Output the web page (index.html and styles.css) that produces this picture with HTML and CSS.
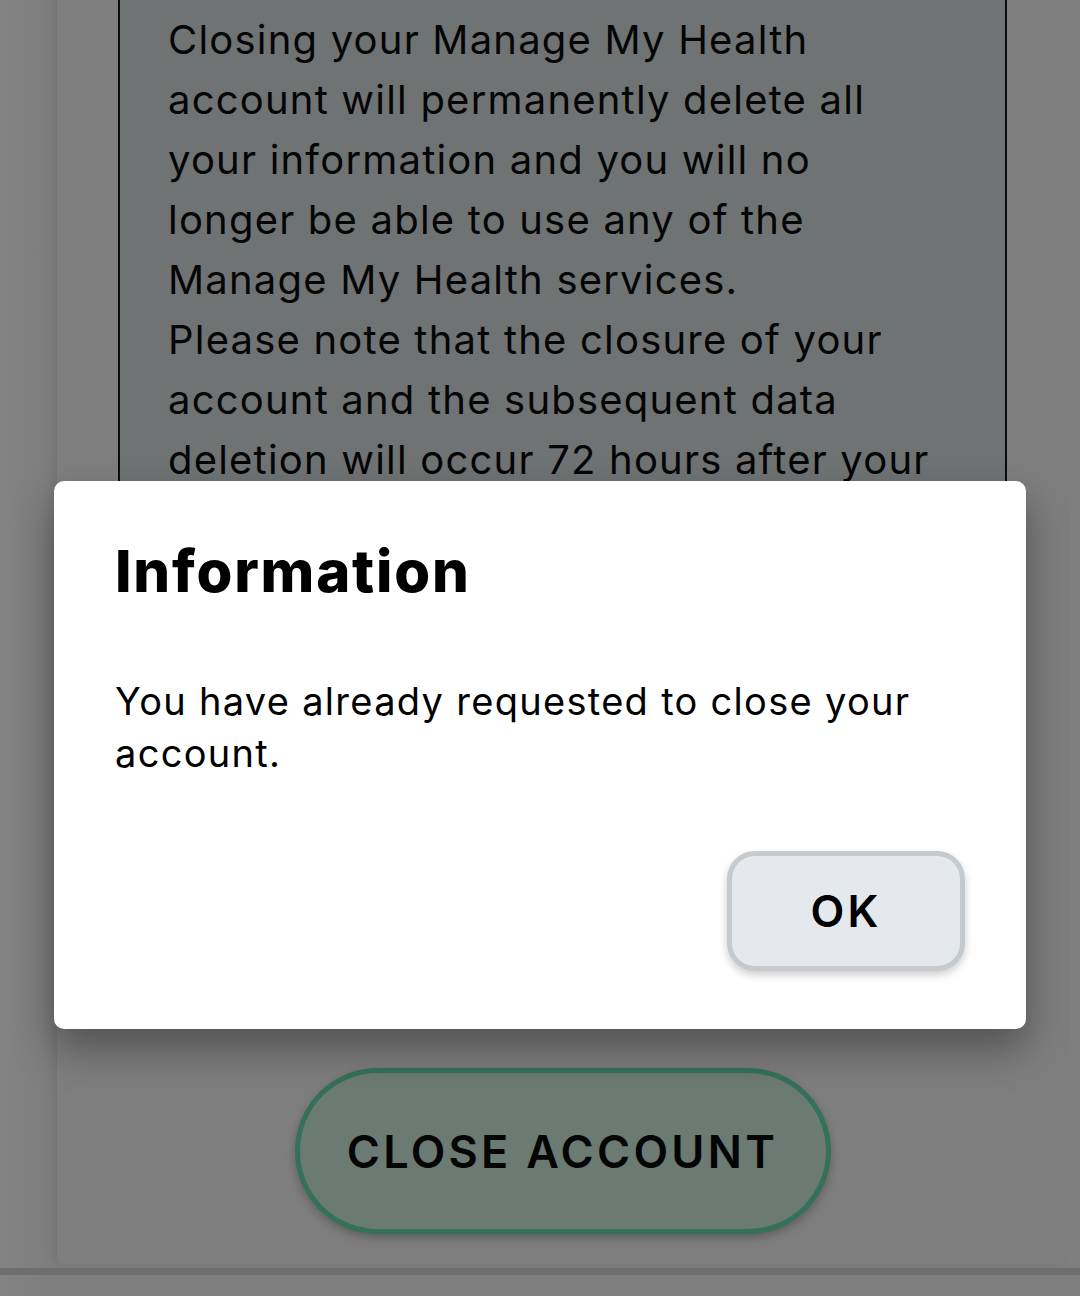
FILE: index.html
```html
<!DOCTYPE html>
<html>
<head>
<meta charset="utf-8">
<link rel="stylesheet" href="styles.css">
</head>
<body>
<div class="page">
  <div class="card">
    <div class="notice">
      <p>Closing your Manage My Health account will permanently delete all your information and you will no longer be able to use any of the Manage My Health services.</p>
      <p>Please note that the closure of your account and the subsequent data deletion will occur 72 hours after your request.</p>
    </div>
    <div class="actions">
      <button class="close-btn">CLOSE ACCOUNT</button>
    </div>
  </div>
  <div class="bottom-line"></div>
</div>
<div class="dialog" role="dialog">
  <h2 class="dialog-title">Information</h2>
  <p class="dialog-body">You have already requested to close your account.</p>
  <div class="dialog-actions">
    <button class="ok-btn">OK</button>
  </div>
</div>
</body>
</html>
```
FILE: styles.css
```css
html, body {
  margin: 0;
  padding: 0;
}
body {
  width: 1080px;
  height: 1296px;
  overflow: hidden;
  background: linear-gradient(90deg, #838383 0, #7f7f7f 40px, #7f7f7f 100%);
  font-family: Inter, "Liberation Sans", sans-serif;
  position: relative;
}
.page {
  display: flex;
  flex-direction: column;
}
.card {
  margin-left: 57px;
  width: 1011px;
  margin-top: -60px;
  background: #7e7e7e;
  box-shadow: -6px 0 10px rgba(0,0,0,0.08);
  border-radius: 0 0 8px 8px;
}
.notice {
  margin-left: 61px;
  width: 889px;
  height: 1070px;
  border: 2px solid #0c0c0c;
  background: #6f7373;
  padding: 68px 58px 0 48px;
  box-sizing: border-box;
  color: #050505;
  font-size: 40px;
  line-height: 60px;
  letter-spacing: 1.2px;
}
.notice p {
  margin: 0;
}
.actions {
  display: flex;
  justify-content: center;
  padding: 58px 0 31px;
}
.close-btn {
  width: 536px;
  height: 166px;
  border-radius: 83px;
  border: 5px solid #35705a;
  background: #6b7a72;
  color: #050505;
  font-family: inherit;
  font-size: 45px;
  font-weight: 600;
  letter-spacing: 3.3px;
  box-shadow: 0 4px 10px rgba(0,0,0,0.25);
}
.bottom-line {
  height: 7px;
  background: #6e6e6e;
  margin-top: 3px;
}
.dialog {
  position: absolute;
  left: 54px;
  top: 481px;
  width: 972px;
  height: 548px;
  box-sizing: border-box;
  background: #fff;
  border-radius: 10px;
  padding: 0 61px;
  box-shadow: 0 20px 40px rgba(0,0,0,0.35);
  display: flex;
  flex-direction: column;
}
.dialog-title {
  margin: 52px 0 0;
  font-size: 58px;
  line-height: 76px;
  font-weight: 800;
  letter-spacing: 1.8px;
  color: #000;
}
.dialog-body {
  margin: 66px 0 0;
  font-size: 38px;
  line-height: 52px;
  letter-spacing: 1.3px;
  color: #000;
}
.dialog-actions {
  display: flex;
  justify-content: flex-end;
  margin-top: auto;
  margin-bottom: 58px;
}
.ok-btn {
  width: 238px;
  height: 120px;
  border-radius: 28px;
  border: 5px solid #c5cace;
  background: #e5e9ed;
  color: #000;
  font-family: inherit;
  font-size: 44px;
  font-weight: 600;
  letter-spacing: 3px;
  box-shadow: 0 4px 8px rgba(0,0,0,0.2);
}
```
